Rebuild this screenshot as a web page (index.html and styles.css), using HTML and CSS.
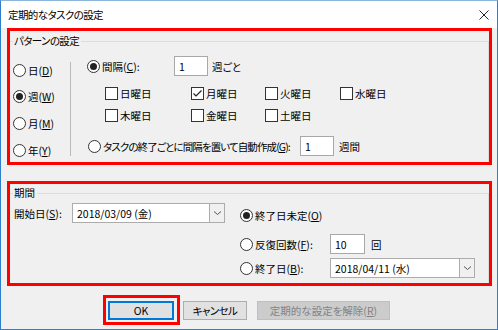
FILE: index.html
```html
<!DOCTYPE html>
<html lang="ja">
<head>
<meta charset="utf-8">
<link rel="stylesheet" href="styles.css">
</head>
<body>
<div class="window">
  <div class="titlebar">
    <span class="title tight">定期的なタスクの設定</span>
    <svg class="close" width="10" height="10" viewBox="0 0 10 10"><path d="M0.5 0.5L9.5 9.5M9.5 0.5L0.5 9.5" stroke="#222" stroke-width="1" fill="none"/></svg>
  </div>
  <div class="body">
    <div class="hl hl-pattern">
      <fieldset class="group">
        <legend class="tight">パターンの設定</legend>
        <div class="pattern">
          <div class="freq">
            <div class="opt"><span class="radio"></span>日(<u>D</u>)</div>
            <div class="opt"><span class="radio on"></span>週(<u>W</u>)</div>
            <div class="opt"><span class="radio"></span>月(<u>M</u>)</div>
            <div class="opt"><span class="radio"></span>年(<u>Y</u>)</div>
          </div>
          <div class="sep"></div>
          <div class="detail">
            <div class="row r-interval">
              <div class="opt lbl-interval"><span class="radio on"></span>間隔(<u>C</u>):</div>
              <span class="input w34">1</span>
              <span class="after">週ごと</span>
            </div>
            <div class="days">
              <div class="opt"><span class="check"></span>日曜日</div>
              <div class="opt"><span class="check on"><svg width="11" height="11" viewBox="0 0 11 11"><path d="M1.5 5.5L4 8L9.5 2.5" stroke="#222" stroke-width="1.2" fill="none"/></svg></span>月曜日</div>
              <div class="opt"><span class="check"></span>火曜日</div>
              <div class="opt"><span class="check"></span>水曜日</div>
              <div class="opt"><span class="check"></span>木曜日</div>
              <div class="opt"><span class="check"></span>金曜日</div>
              <div class="opt"><span class="check"></span>土曜日</div>
            </div>
            <div class="row r-regen">
              <div class="opt lbl-regen"><span class="radio"></span><span class="tighter">タスクの終了ごとに間隔を置いて自動作成(<u>G</u>):</span></div>
              <span class="input w34">1</span>
              <span class="after ml5">週間</span>
            </div>
          </div>
        </div>
      </fieldset>
    </div>

    <div class="hl hl-range">
      <fieldset class="group">
        <legend>期間</legend>
        <div class="range">
          <div class="start">
            <span class="lbl-start">開始日(<u>S</u>):</span>
            <div class="combo w153"><span class="combo-text">2018/03/09 (金)</span><span class="drop"><svg width="9" height="6" viewBox="0 0 9 6"><path d="M1 1.5L4.5 4.5L8 1.5" stroke="#555" stroke-width="1" fill="none"/></svg></span></div>
          </div>
          <div class="ends">
            <div class="row e1"><div class="opt"><span class="radio on"></span>終了日未定(<u>O</u>)</div></div>
            <div class="row e2"><div class="opt lbl-end"><span class="radio"></span>反復回数(<u>F</u>):</div><span class="input w35">10</span><span class="after ml6">回</span></div>
            <div class="row e3"><div class="opt lbl-end"><span class="radio"></span>終了日(<u>B</u>):</div>
              <div class="combo w145"><span class="combo-text">2018/04/11 (水)</span><span class="drop"><svg width="9" height="6" viewBox="0 0 9 6"><path d="M1 1.5L4.5 4.5L8 1.5" stroke="#555" stroke-width="1" fill="none"/></svg></span></div>
            </div>
          </div>
        </div>
      </fieldset>
    </div>

    <div class="buttons">
      <div class="hl hl-ok"><span class="btn btn-ok">OK</span></div>
      <span class="btn btn-cancel tight">キャンセル</span>
      <span class="btn btn-disabled">定期的な設定を解除(<u>R</u>)</span>
    </div>
  </div>
</div>
</body>
</html>
```

FILE: styles.css
```css
* { box-sizing: border-box; }
html, body { margin: 0; padding: 0; }
body {
  width: 498px;
  height: 330px;
  overflow: hidden;
  font-family: "Noto Sans CJK JP", "Noto Sans", sans-serif;
  font-size: 10.5px;
  font-feature-settings: "palt";
  color: #000;
  background: #f0f0f0;
}
u { text-decoration: underline; text-underline-offset: 1px; }
.tight { letter-spacing: -0.6px; }
.tighter { letter-spacing: -0.9px; }

.window {
  width: 498px;
  height: 330px;
  border: 1px solid #2d7fcb;
  border-top-color: #8db6de;
  background: #f0f0f0;
}
.titlebar {
  height: 27px;
  background: #fff;
  display: flex;
  align-items: center;
  justify-content: space-between;
  padding: 0 8px 0 7px;
}
.title { line-height: 14px; margin-top: 1px; }
.close { display: block; }

.body { padding: 0 5px 0 6px; }

.hl { border: 3px solid #ff0000; }
.hl-pattern { height: 137px; }
.hl-range { height: 105px; margin-top: 16px; }

.group {
  margin: 0;
  padding: 0 0 0 3px;
  border: 1px solid #dcdcdc;
  border-left: 0;
  border-bottom: 0;
  min-width: 0;
  height: 100%;
}
.group legend {
  padding: 0 2px 0 1px;
  margin-left: 0;
  line-height: 20px;
  height: 20px;
}
.hl-range .group legend { line-height: 18px; height: 18px; }

.opt {
  display: flex;
  align-items: center;
  white-space: nowrap;
}
.radio {
  width: 13px;
  height: 13px;
  border: 1px solid #333;
  border-radius: 50%;
  background: #fff;
  margin-right: 2px;
  flex: none;
  display: flex;
  align-items: center;
  justify-content: center;
}
.radio.on::after {
  content: "";
  width: 7px;
  height: 7px;
  border-radius: 50%;
  background: #222;
}
.check {
  width: 13px;
  height: 13px;
  border: 1px solid #333;
  background: #fff;
  margin-right: 2px;
  flex: none;
  display: flex;
  align-items: center;
  justify-content: center;
}
.check svg { display: block; }

.pattern {
  display: flex;
  padding-top: 5px;
}
.freq {
  width: 57px;
  padding-top: 1px;
}
.freq .opt { height: 26.67px; }
.sep {
  width: 1px;
  background: #b9b9b9;
  margin-top: 6px;
  height: 94px;
}
.detail { padding-left: 16px; }
.row { display: flex; align-items: center; }
.r-interval { height: 20px; }
.lbl-interval { width: 87px; }
.lbl-regen { width: 212px; }
.input {
  height: 20px;
  border: 1px solid #a8a8a8;
  background: #fff;
  padding-left: 4px;
  display: flex;
  align-items: center;
}
.w34 { width: 34px; }
.w35 { width: 35px; }
.after { margin-left: 4px; }
.ml5 { margin-left: 5px; }
.ml6 { margin-left: 6px; }

.days {
  display: grid;
  grid-template-columns: 86px 74px 75px auto;
  grid-auto-rows: 22px;
  margin-top: 6px;
  margin-left: 18px;
  align-items: center;
}
.r-regen { height: 20px; margin-top: 10px; margin-left: 1px; }

.range {
  display: flex;
  padding-top: 1px;
}
.start {
  width: 227px;
  display: flex;
  align-items: center;
  height: 20px;
}
.lbl-start { width: 59px; padding-left: 1px; white-space: nowrap; }
.combo {
  height: 20px;
  border: 1px solid #acacac;
  background: #fff;
  display: flex;
  align-items: stretch;
}
.w153 { width: 153px; }
.w145 { width: 145px; }
.combo-text { flex: 1; padding-left: 4px; display: flex; align-items: center; white-space: nowrap; }
.drop {
  width: 15px;
  border-left: 1px solid #acacac;
  background: #f0f0f0;
  display: flex;
  align-items: center;
  justify-content: center;
}
.drop svg { display: block; }
.ends { display: flex; flex-direction: column; }
.e1 { height: 24px; }
.e2 { height: 20px; margin-top: 7px; }
.e3 { height: 20px; margin-top: 4px; }
.lbl-end { width: 90px; }

.buttons {
  display: flex;
  align-items: center;
  margin-top: 9px;
  margin-left: 96px;
}
.hl-ok { padding: 3px 3px 2px 2px; }
.btn {
  height: 19px;
  display: flex;
  align-items: center;
  justify-content: center;
  background: #e1e1e1;
  border: 1px solid #adadad;
  white-space: nowrap;
}
.btn-ok { width: 66px; border-color: #0078d7; box-shadow: inset 0 0 0 1px #0078d7; }
.btn-cancel { width: 64px; margin-left: 3px; }
.btn-disabled { width: 133px; margin-left: 10px; background: #cccccc; border-color: #bfbfbf; color: #838383; }
```
